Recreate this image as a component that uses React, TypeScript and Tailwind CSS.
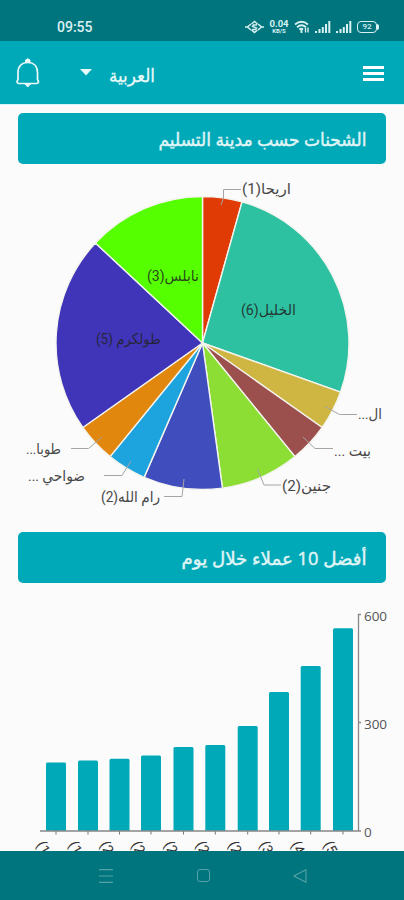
const CX = 202.5;
const CY = 163;
const R = 146.5;

type Label = { text: string; x: number; y: number; w: number; line?: string };
type City = { count: number; color: string; label: Label };

const cities: City[] = [
  { count: 1, color: "#e03b05", label: { text: "اريحا(1)", x: 291, y: 14, w: 49, line: "M221 25 L223.500 18 V9.500 H241" } },
  { count: 6, color: "#2dc0a1", label: { text: "الخليل(6)", x: 296, y: 135, w: 55 } },
  { count: 1, color: "#cfb642", label: { text: "ال...", x: 382, y: 239, w: 24, line: "M325 226.500 L339.500 234.500 H357" } },
  { count: 1, color: "#9c504e", label: { text: "بيت ...", x: 371, y: 276, w: 37, line: "M303 257 L315 268.500 H333" } },
  { count: 2, color: "#8cde35", label: { text: "جنين(2)", x: 331, y: 311, w: 49, line: "M257.500 289 L264 305 H281" } },
  { count: 2, color: "#404dbd", label: { text: "رام الله(2)", x: 160, y: 322, w: 59, line: "M184 299 L182 316.500 H164" } },
  { count: 1, color: "#1da4df", label: { text: "ضواحي ...", x: 85, y: 301, w: 57, line: "M131 281 L122 295.500 H104" } },
  { count: 1, color: "#e1870d", label: { text: "طوبا...", x: 61, y: 274, w: 35, line: "M102 257 L88.500 268.500 H71" } },
  { count: 5, color: "#4035b9", label: { text: "طولكرم (5)", x: 161, y: 164, w: 65 } },
  { count: 3, color: "#55ff00", label: { text: "نابلس(3)", x: 199, y: 101, w: 52 } },
];

const total = cities.reduce((sum, c) => sum + c.count, 0);

function point(count: number) {
  const a = (count / total) * Math.PI * 2;
  return `${CX + R * Math.sin(a)} ${CY - R * Math.cos(a)}`;
}

const slices = cities.map((city, i) => {
  const start = cities.slice(0, i).reduce((sum, c) => sum + c.count, 0);
  return {
    ...city,
    d: `M${CX} ${CY} L${point(start)} A${R} ${R} 0 0 1 ${point(start + city.count)} Z`,
  };
});

const customers = [
  { x: 46, value: 190 },
  { x: 78, value: 196 },
  { x: 109.5, value: 201 },
  { x: 141, value: 210 },
  { x: 173.5, value: 233 },
  { x: 205.3, value: 239 },
  { x: 237.7, value: 292 },
  { x: 269, value: 386 },
  { x: 300.7, value: 458 },
  { x: 333, value: 563 },
];

function Signal() {
  return (
    <svg width="16" height="14" viewBox="0 0 16 14" fill="#d9f1f2">
      <path d="M0 11h2v2H0zM3.500 9h2v4h-2zM6.800 7h2v6h-2zM10 4h2v9h-2zM13.300 1h2v12h-2z" />
    </svg>
  );
}

function StatusBar() {
  return (
    <div className="flex h-[41px] shrink-0 items-start bg-[#00757d] pr-[25px] pl-[57px] pt-[20px] text-[#d9f1f2]">
      <span className="font-[Roboto,sans-serif] text-[14px] leading-[15px] font-medium">09:55</span>
      <div className="ml-auto flex items-center">
        <svg width="19" height="14" viewBox="0 0 19 14" fill="none" stroke="currentColor" strokeWidth="1.500">
          <path d="M0 7h3M16 7h3M6.500 4L9.500 1.500 12.500 4M6.500 10l3 2.500 3-2.500M6 4L2.500 7 6 10M13 4l3.500 3-3.500 3M12 5H8.500L7.500 6.500l4 1.500-1 1.500H7" />
        </svg>
        <div className="ml-[5px] flex w-[20px] flex-col items-center font-[Roboto,sans-serif] font-bold">
          <div className="h-[8px] text-[9.5px] leading-[8px]">0.04</div>
          <div className="h-[6px] text-[6px] leading-[6px]">KB/S</div>
        </div>
        <svg className="ml-[5px]" width="17" height="14" viewBox="0 0 17 14" fill="none" stroke="currentColor" strokeWidth="1.900">
          <path d="M1 4.500Q7.500-.8 14 4.500M3 7.200Q7.500 3.500 12 7.200M5.300 9.500Q7.500 8 9 9.500M7.500 10v3" />
          <path d="M11.500 12.500V8M14 7.500v5" strokeWidth="1.400" />
        </svg>
        <div className="ml-[4px] flex gap-[5px]">
          <Signal />
          <Signal />
        </div>
        <div className="ml-[5px] flex h-[12px] w-[20px] items-center justify-center rounded-[4px] border-[1.5px] border-current font-[Roboto,sans-serif] text-[8px] leading-none font-medium">
          92
        </div>
        <div className="h-[6px] w-[2px] rounded-r bg-current" />
      </div>
    </div>
  );
}

function Header() {
  return (
    <header className="flex h-[63px] shrink-0 items-center bg-[#00a9b8] pr-[20px] pl-[16px] text-[#e9fafa]">
      <svg width="24" height="32" viewBox="0 0 24 32" fill="none" stroke="currentColor" strokeWidth="1.700">
        <path d="M11.700 5.500C5.500 5.500 2 9.500 2 15.500V22.500L1 24.500Q1.200 26.500 3 26.500H20.500Q22.300 26.500 22.500 24.500L21.500 22.500V15.500C21.500 9.500 18 5.500 11.700 5.500Z" />
        <path d="M9.500 5V3Q11.700.5 14 3v2ZM9 27h5.500L11.700 30Z" fill="currentColor" strokeWidth="1" />
      </svg>
      <svg className="ml-[40px]" width="12" height="7" viewBox="0 0 12 7" fill="currentColor">
        <path d="M0 0h12L6 6.500Z" />
      </svg>
      <svg className="ml-[14px]" width="52" height="32" viewBox="0 0 52 32">
        <text x="49" y="25" direction="rtl" textLength="46" lengthAdjust="spacingAndGlyphs" fontSize="18" fill="currentColor" stroke="currentColor" strokeWidth="0.300">
          العربية
        </text>
      </svg>
      <div className="mt-[2px] ml-auto flex w-[21px] flex-col gap-[3px]">
        <div className="h-[3px] bg-white" />
        <div className="h-[3px] bg-white" />
        <div className="h-[3px] bg-white" />
      </div>
    </header>
  );
}

function SectionTitle({ text, width }: { text: string; width: number }) {
  return (
    <h2 className="mx-[18px] h-[51px] shrink-0 rounded-[5px] bg-[#00a9b8] font-['Open_Sans','DejaVu_Sans',sans-serif]">
      <svg width="368" height="51" viewBox="0 0 368 51">
        <text x="348.500" y="32.500" direction="rtl" textLength={width} lengthAdjust="spacingAndGlyphs" fontSize="18" fill="#e0f5f6" stroke="#e0f5f6" strokeWidth="0.450">
          {text}
        </text>
      </svg>
    </h2>
  );
}

function PieChart() {
  return (
    <svg className="mt-[16px] shrink-0 font-[Roboto,'DejaVu_Sans',sans-serif]" width="404" height="340" viewBox="0 0 404 340">
      {slices.map((s) => (
        <path key={s.label.text} d={s.d} fill={s.color} stroke="#f4f4ee" strokeWidth="1.400" strokeLinejoin="round" />
      ))}
      {slices.map(({ label }) => (
        <g key={label.text}>
          {label.line && <path d={label.line} fill="none" stroke="#a5a5a5" />}
          <text
            x={label.x}
            y={label.y}
            direction="rtl"
            textLength={label.w}
            lengthAdjust="spacingAndGlyphs"
            fontSize="15"
            fill={label.line ? "#484848" : "#222"}
            fillOpacity={label.line ? 1 : 0.85}
          >
            {label.text}
          </text>
        </g>
      ))}
    </svg>
  );
}

function BarChart() {
  return (
    <svg className="mt-[17px] shrink-0" width="404" height="270" viewBox="0 0 404 270">
      {customers.map(({ x, value }) => {
        const h = value * 0.36;
        return (
          <g key={x}>
            <path d={`M${x} 231V${232.5 - h}q0-1.500 1.500-1.500h17q1.500 0 1.500 1.500V231Z`} fill="#00a9b8" />
            <path d={`M${x + 10} 231v3.500`} stroke="#777" />
            <text transform={`translate(${x - 10} 244.500) rotate(60)`} fontSize="14" fill="#333" fontFamily="Roboto, sans-serif">
              ({value})
            </text>
          </g>
        );
      })}
      <path d="M40 231H361M361 14.500H358.500V231M358.500 122.500H361" fill="none" stroke="#888" strokeWidth="1.300" />
      <g fontSize="13.500" fill="#555" fontFamily="Open Sans, sans-serif">
        <text x="364" y="20.500" textLength="23">600</text>
        <text x="364" y="128.500" textLength="23">300</text>
        <text x="364" y="236.500">0</text>
      </g>
    </svg>
  );
}

export default function App() {
  return (
    <div className="flex h-[900px] w-[404px] flex-col overflow-hidden bg-[#fbfbfb] font-['DejaVu_Sans',sans-serif]">
      <StatusBar />
      <Header />
      <main className="flex min-h-0 flex-1 flex-col overflow-hidden border-t border-[#d5f5fa] pt-[8px]">
        <SectionTitle text="الشحنات حسب مدينة التسليم" width={208} />
        <PieChart />
        <div className="h-[12px] shrink-0" />
        <SectionTitle text="أفضل 10 عملاء خلال يوم" width={185} />
        <BarChart />
      </main>

      {/* Android navigation */}
      <nav className="flex h-[49px] shrink-0 items-center justify-between bg-[#00757d] pr-[97px] pl-[99px] text-[#55a3a8]">
        <svg width="14" height="14" viewBox="0 0 14 14" fill="none" stroke="currentColor" strokeWidth="1.200">
          <path d="M0 .7h14M0 7h14M0 13.300h14" />
        </svg>
        <div className="h-[13px] w-[13px] rounded-[3px] border border-current" />
        <svg width="14" height="14" viewBox="0 0 14 14" fill="none" stroke="currentColor" strokeWidth="1.100">
          <path d="M.8 7L13 .8v12.400Z" strokeLinejoin="round" />
        </svg>
      </nav>
    </div>
  );
}
